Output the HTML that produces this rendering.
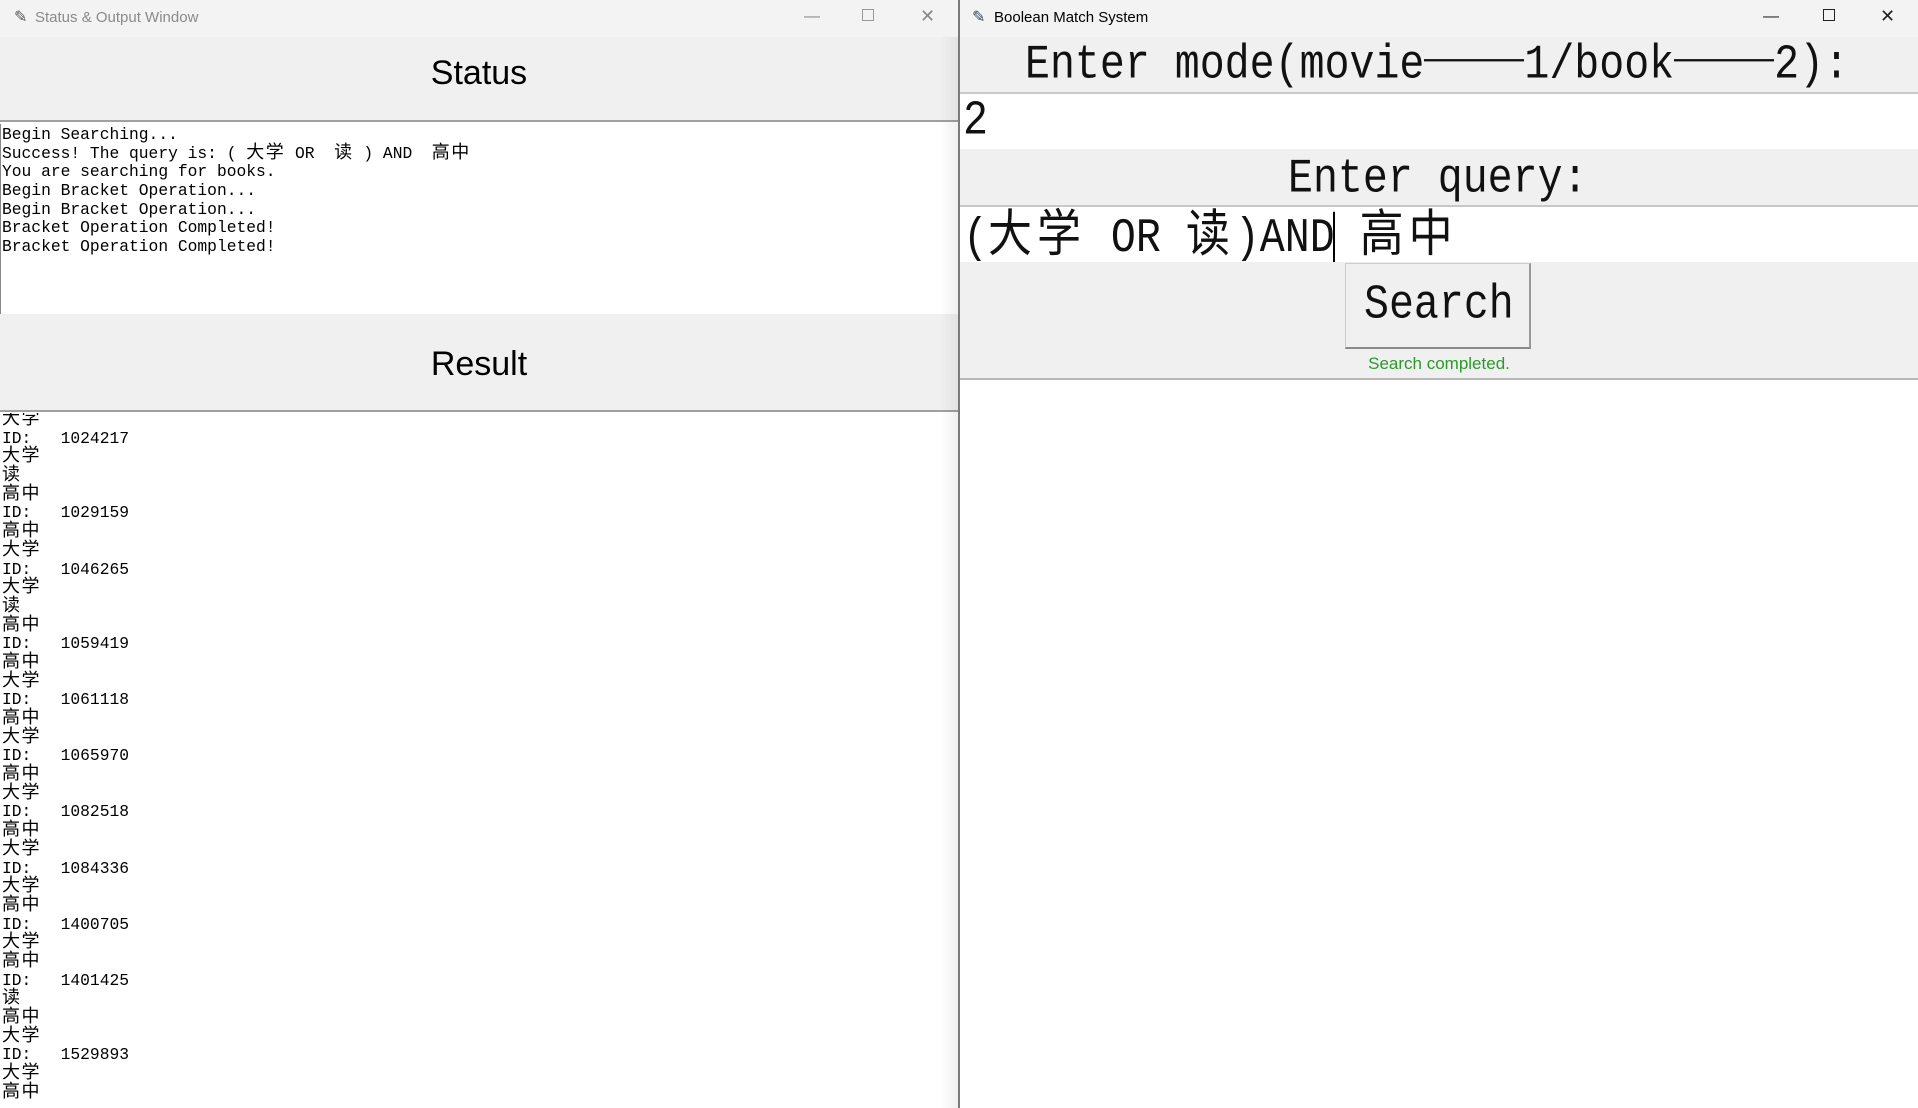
<!DOCTYPE html>
<html><head><meta charset="utf-8"><style>
*{margin:0;padding:0;box-sizing:border-box}
body{width:1918px;height:1108px;overflow:hidden;background:#fff;position:relative;font-family:"Liberation Sans","Noto Sans CJK SC",sans-serif}
.a{position:absolute}
.tb{height:37px;background:#f3f3f3;font-size:15px}
.ctl{position:absolute;top:8px;font-size:16px;color:#888}
.mono{font-family:"Liberation Mono","Noto Sans CJK SC",monospace}
.c{font-family:"Noto Sans CJK SC",sans-serif;font-size:18px;letter-spacing:1.5px;line-height:0}
.pre{font-size:16.3px;color:#000}
.pre div{white-space:pre;height:18.7px;line-height:18.7px;overflow:visible}
.big{font-family:"Liberation Mono","Noto Sans CJK SC",monospace;font-size:41.6px;white-space:pre;color:#111;transform:scaleY(1.15)}
.bc{font-family:"Noto Sans CJK SC",sans-serif;font-size:44px;letter-spacing:5px;line-height:44px}
.dash{display:inline-block;width:100px;height:2px;background:#111;vertical-align:middle;position:relative;top:-4px}
</style></head><body>
<div class="a tb" style="left:0;top:0;width:958px;color:#8a8a8a">
 <div class="a" style="left:14px;top:7px;color:#555;font-size:16px">✎</div>
 <div class="a" style="left:35px;top:9px">Status &amp; Output Window</div>
 <div class="ctl" style="left:804px">—</div>
 <div class="ctl" style="left:862px;top:9px;width:12px;height:12px;border:1px solid #999"></div>
 <div class="ctl" style="left:920px;top:6px;font-size:18px">✕</div>
</div>
<div class="a" style="left:0;top:37px;width:958px;height:85px;background:#f0f0f0;border-bottom:2px solid #a0a0a0;text-align:center;font-size:34px;line-height:72px;color:#000">Status</div>
<div class="a mono pre" style="left:2px;top:126px"><div>Begin Searching...</div><div>Success! The query is: ( <span class="c">大学</span> OR  <span class="c">读</span> ) AND  <span class="c">高中</span></div><div>You are searching for books.</div><div>Begin Bracket Operation...</div><div>Begin Bracket Operation...</div><div>Bracket Operation Completed!</div><div>Bracket Operation Completed!</div></div>
<div class="a" style="left:0;top:124px;width:1px;height:190px;background:#888"></div>
<div class="a" style="left:0;top:314px;width:958px;height:98px;background:#f0f0f0;border-bottom:2px solid #a0a0a0;text-align:center;font-size:34px;line-height:100px;color:#000">Result</div>
<div class="a" style="left:0;top:413px;width:958px;height:695px;overflow:hidden">
<div class="a mono pre" style="left:2px;top:-2px"><div><span class="c">大学</span></div><div>ID:   1024217</div><div><span class="c">大学</span></div><div><span class="c">读</span></div><div><span class="c">高中</span></div><div>ID:   1029159</div><div><span class="c">高中</span></div><div><span class="c">大学</span></div><div>ID:   1046265</div><div><span class="c">大学</span></div><div><span class="c">读</span></div><div><span class="c">高中</span></div><div>ID:   1059419</div><div><span class="c">高中</span></div><div><span class="c">大学</span></div><div>ID:   1061118</div><div><span class="c">高中</span></div><div><span class="c">大学</span></div><div>ID:   1065970</div><div><span class="c">高中</span></div><div><span class="c">大学</span></div><div>ID:   1082518</div><div><span class="c">高中</span></div><div><span class="c">大学</span></div><div>ID:   1084336</div><div><span class="c">大学</span></div><div><span class="c">高中</span></div><div>ID:   1400705</div><div><span class="c">大学</span></div><div><span class="c">高中</span></div><div>ID:   1401425</div><div><span class="c">读</span></div><div><span class="c">高中</span></div><div><span class="c">大学</span></div><div>ID:   1529893</div><div><span class="c">大学</span></div><div><span class="c">高中</span></div></div></div>
<div class="a" style="left:940px;top:37px;width:18px;height:1071px;background:linear-gradient(to right,rgba(0,0,0,0),rgba(0,0,0,0.06))"></div>
<div class="a" style="left:958px;top:0;width:2px;height:1108px;background:#7a7a7a"></div>
<div class="a tb" style="left:960px;top:0;width:958px;color:#000">
 <div class="a" style="left:12px;top:7px;color:#345;font-size:16px">✎</div>
 <div class="a" style="left:34px;top:9px">Boolean Match System</div>
 <div class="ctl" style="left:803px;color:#222">—</div>
 <div class="ctl" style="left:863px;top:9px;width:12px;height:12px;border:1.5px solid #222"></div>
 <div class="ctl" style="left:920px;top:6px;font-size:18px;color:#222">✕</div>
</div>
<div class="a" style="left:960px;top:37px;width:958px;height:57px;background:#f0f0f0;border-bottom:2px solid #c8c8c8"></div>
<div class="a big" style="left:1025px;top:40px;line-height:52px">Enter mode(movie<span class="dash"></span>1/book<span class="dash"></span>2):</div>
<div class="a big" style="left:963px;top:96px;line-height:52px">2</div>
<div class="a" style="left:960px;top:149px;width:958px;height:58px;background:#f0f0f0;border-bottom:2px solid #c8c8c8"></div>
<div class="a big" style="left:1288px;top:152px;line-height:56px">Enter query:</div>
<div class="a big" style="left:963px;top:208px;line-height:52px">(<span class="bc">大学</span> OR <span class="bc">读</span>)AND<span style="display:inline-block;width:2px;height:46px;background:#000;vertical-align:middle;margin-left:-2px"></span> <span class="bc">高中</span></div>
<div class="a" style="left:960px;top:262px;width:958px;height:118px;background:#f0f0f0;border-bottom:2px solid #b8b8b8"></div>
<div class="a" style="left:1345px;top:263px;width:186px;height:86px;background:#f0f0f0;border:1px solid #ccc;border-right:2px solid #999;border-bottom:2px solid #888"></div>
<div class="a big" style="left:1364px;top:280px;line-height:52px">Search</div>
<div class="a" style="left:960px;top:354px;width:958px;text-align:center;font-size:17px;color:#2a9a2a">Search completed.</div>
</body></html>
